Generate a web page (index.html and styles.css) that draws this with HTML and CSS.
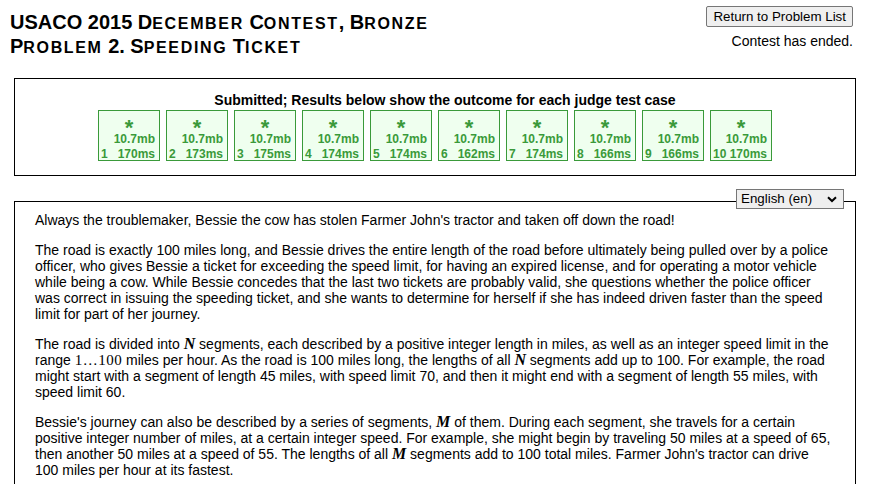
FILE: index.html
```html
<!DOCTYPE html>
<html>
<head>
<meta charset="utf-8">
<link rel="stylesheet" href="styles.css">
</head>
<body>
<div class="header">
  <h2 class="title">USACO 2015 D<span class="sc">ecember</span> C<span class="sc">ontest</span>, B<span class="sc">ronze</span><br>P<span class="sc">roblem</span> 2. S<span class="sc">peeding</span> T<span class="sc">icket</span></h2>
  <div class="header-right">
    <button class="btn">Return to Problem List</button>
    <div class="ended">Contest has ended.</div>
  </div>
</div>
<div class="results">
  <div class="results-title">Submitted; Results below show the outcome for each judge test case</div>
  <div class="trials">
    <div class="trial"><div class="sym">*</div><div class="mb">10.7mb</div><div class="row"><span>1</span><span>170ms</span></div></div>
    <div class="trial"><div class="sym">*</div><div class="mb">10.7mb</div><div class="row"><span>2</span><span>173ms</span></div></div>
    <div class="trial"><div class="sym">*</div><div class="mb">10.7mb</div><div class="row"><span>3</span><span>175ms</span></div></div>
    <div class="trial"><div class="sym">*</div><div class="mb">10.7mb</div><div class="row"><span>4</span><span>174ms</span></div></div>
    <div class="trial"><div class="sym">*</div><div class="mb">10.7mb</div><div class="row"><span>5</span><span>174ms</span></div></div>
    <div class="trial"><div class="sym">*</div><div class="mb">10.7mb</div><div class="row"><span>6</span><span>162ms</span></div></div>
    <div class="trial"><div class="sym">*</div><div class="mb">10.7mb</div><div class="row"><span>7</span><span>174ms</span></div></div>
    <div class="trial"><div class="sym">*</div><div class="mb">10.7mb</div><div class="row"><span>8</span><span>166ms</span></div></div>
    <div class="trial"><div class="sym">*</div><div class="mb">10.7mb</div><div class="row"><span>9</span><span>166ms</span></div></div>
    <div class="trial"><div class="sym">*</div><div class="mb">10.7mb</div><div class="row"><span>10</span><span>170ms</span></div></div>
  </div>
</div>
<div class="problem">
  <div class="lang">English (en)<svg class="chev" width="10" height="7" viewBox="0 0 10 7"><path d="M1 1.2 L5 5 L9 1.2" fill="none" stroke="#000" stroke-width="2"/></svg></div>
  <div class="text">
    <p>Always the troublemaker, Bessie the cow has stolen Farmer John's tractor and taken off down the road!</p>
    <p>The road is exactly 100 miles long, and Bessie drives the entire length of the road before ultimately being pulled over by a police officer, who gives Bessie a ticket for exceeding the speed limit, for having an expired license, and for operating a motor vehicle while being a cow. While Bessie concedes that the last two tickets are probably valid, she questions whether the police officer was correct in issuing the speeding ticket, and she wants to determine for herself if she has indeed driven faster than the speed limit for part of her journey.</p>
    <p>The road is divided into <span class="mi">N</span> segments, each described by a positive integer length in miles, as well as an integer speed limit in the range <span class="mn">1…100</span> miles per hour. As the road is 100 miles long, the lengths of all <span class="mi">N</span> segments add up to 100. For example, the road might start with a segment of length 45 miles, with speed limit 70, and then it might end with a segment of length 55 miles, with speed limit 60.</p>
    <p>Bessie's journey can also be described by a series of segments, <span class="mi">M</span> of them. During each segment, she travels for a certain positive integer number of miles, at a certain integer speed. For example, she might begin by traveling 50 miles at a speed of 65, then another 50 miles at a speed of 55. The lengths of all <span class="mi">M</span> segments add to 100 total miles. Farmer John's tractor can drive 100 miles per hour at its fastest.</p>
  </div>
</div>
</body>
</html>
```

FILE: styles.css
```css
html, body {
  margin: 0;
  padding: 0;
  background: #fff;
  color: #000;
  font-family: "Liberation Sans", Arial, sans-serif;
  overflow: hidden;
}
.header {
  display: flex;
  justify-content: space-between;
  align-items: flex-start;
  padding: 6px 24px 0 10px;
  height: 72px;
}
.title {
  margin: 5px 0 0 0;
  font-size: 20px;
  line-height: 23px;
  font-weight: bold;
}
.sc {
  font-size: 16px;
  text-transform: uppercase;
  letter-spacing: 1.65px;
}
.header-right {
  display: flex;
  flex-direction: column;
  align-items: flex-end;
}
.btn {
  font-family: "Liberation Sans", Arial, sans-serif;
  font-size: 13.33px;
  height: 21px;
  padding: 0 6px;
  background: #efefef;
  border: 1px solid #767676;
  border-radius: 2px;
  color: #000;
}
.ended {
  font-size: 14px;
  line-height: 16px;
  margin-top: 6px;
}
.results {
  margin-left: 14px;
  width: 840px;
  height: 96px;
  border: 1px solid #000;
}
.results-title {
  text-align: center;
  font-weight: bold;
  font-size: 14px;
  line-height: 16px;
  margin-top: 13px;
  padding-left: 20px;
}
.trials {
  display: flex;
  justify-content: center;
  gap: 6px;
  margin-top: 2px;
}
.trial {
  width: 60px;
  height: 49px;
  border: 1px solid #3a9a3a;
  background: #efffef;
  color: #3a9a3a;
  font-weight: bold;
  font-size: 12px;
}
.sym {
  height: 13px;
  padding-top: 7px;
  line-height: 19px;
  font-size: 22px;
  text-align: center;
}
.mb {
  line-height: 15px;
  text-align: right;
  padding-right: 4px;
  margin-top: 1px;
}
.row {
  display: flex;
  justify-content: space-between;
  line-height: 15px;
  padding: 0 4px 0 2px;
}
.problem {
  position: relative;
  margin: 25px 0 0 14px;
  width: 840px;
  height: 400px;
  border: 1px solid #000;
}
.lang {
  position: absolute;
  top: -13px;
  right: 11px;
  width: 96px;
  height: 18px;
  padding-left: 4px;
  border: 1px solid #767676;
  background: #efefef;
  font-size: 13.33px;
  line-height: 18px;
  display: flex;
  align-items: center;
  justify-content: space-between;
  padding-right: 6px;
}
.chev {
  display: block;
}
.text {
  padding: 10px 21px 0 20px;
  font-size: 14px;
  line-height: 16px;
}
.text p {
  margin: 0 0 14px 0;
}
.mi {
  font-family: "Liberation Serif", serif;
  font-style: italic;
  font-weight: bold;
  font-size: 16px;
}
.mn {
  font-family: "Liberation Serif", serif;
  font-size: 15px;
  letter-spacing: 0.5px;
}
```
